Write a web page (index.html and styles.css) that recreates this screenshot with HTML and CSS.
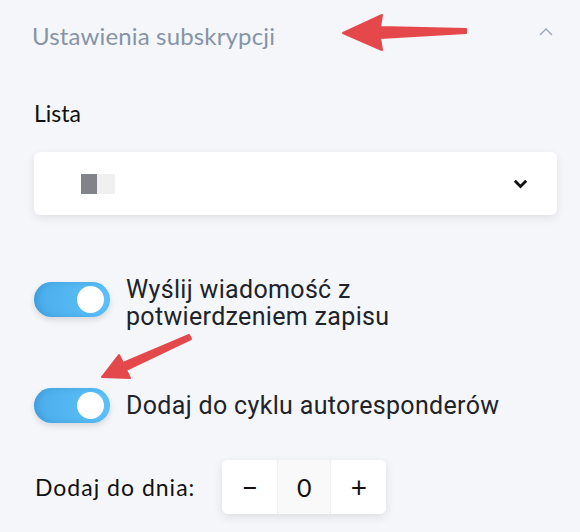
FILE: index.html
```html
<!DOCTYPE html>
<html lang="pl">
<head>
    <meta charset="UTF-8">
    <meta name="viewport" content="width=device-width, initial-scale=1.0">
    <title>Ustawienia subskrypcji</title>
    <link rel="stylesheet" href="styles.css">
</head>
<body>
    <main class="panel">
        <div class="panel-header">
            <h2>Ustawienia subskrypcji</h2>
            <svg class="collapse-icon" width="14" height="8" viewBox="0 0 14 8">
                <path d="M1 7 L7 1 L13 7" fill="none" stroke="#9aa6b4" stroke-width="1.4"/>
            </svg>
        </div>

        <div class="form-group">
            <label class="field-label">Lista</label>
            <div class="select-box">
                <span class="list-swatch">
                    <span class="swatch dark"></span>
                    <span class="swatch light"></span>
                </span>
                <svg class="select-arrow" width="15" height="10" viewBox="0 0 15 10">
                    <path d="M1.8 1.8 L7.5 7.5 L13.2 1.8" fill="none" stroke="#111" stroke-width="2.8"/>
                </svg>
            </div>
        </div>

        <div class="toggle-row first">
            <span class="toggle on"><span class="knob"></span></span>
            <span class="toggle-label">Wyślij wiadomość z<br>potwierdzeniem zapisu</span>
        </div>

        <div class="toggle-row second">
            <span class="toggle on"><span class="knob"></span></span>
            <span class="toggle-label">Dodaj do cyklu autoresponderów</span>
        </div>

        <div class="day-row">
            <span class="field-label day-label">Dodaj do dnia:</span>
            <div class="stepper">
                <button class="step-btn">&minus;</button>
                <span class="step-value">0</span>
                <button class="step-btn">+</button>
            </div>
        </div>
    </main>

    <!-- annotation arrows drawn over the screenshot -->
    <svg class="annotations" width="580" height="532" viewBox="0 0 580 532">
        <polygon points="343,33 382,15 380,27 466,29 466,33 380,38 382,50"
                 fill="#e5484b" stroke="#e5484b" stroke-width="2" stroke-linejoin="round"/>
        <polygon points="102,377 119,355 123,363 189,335 191,339 126,370 130,378"
                 fill="#e5484b" stroke="#e5484b" stroke-width="2" stroke-linejoin="round"/>
    </svg>
</body>
</html>
```

FILE: styles.css
```css
body {
    margin: 0;
    padding: 0;
    background-color: #f5f6fa;
    font-family: Lato, "Noto Sans", Arial, sans-serif;
    color: #111;
}

.panel {
    width: 580px;
    height: 532px;
    box-sizing: border-box;
    padding: 0 23px 0 34px;
    overflow: hidden;
}

.panel-header {
    display: flex;
    align-items: center;
    justify-content: space-between;
    height: 70px;
    padding-right: 4px;
}

.panel-header h2 {
    margin: 0;
    margin-left: -2px;
    font-size: 24px;
    font-weight: 400;
    color: #8594a6;
    letter-spacing: 0.15px;
}

.collapse-icon {
    margin-bottom: 6px;
}

.form-group {
    margin-top: 28px;
}

.field-label {
    display: block;
    font-size: 23px;
    line-height: 30px;
    color: #111;
}

.select-box {
    margin-top: 24px;
    height: 63px;
    background-color: #fff;
    border-radius: 6px;
    box-shadow: 0 3px 10px rgba(0, 0, 0, 0.09);
    display: flex;
    align-items: center;
    justify-content: space-between;
    padding: 0 29px 0 47px;
}

.list-swatch {
    display: flex;
}

.swatch {
    height: 20px;
}

.swatch.dark {
    background-color: #808388;
    width: 16px;
}

.swatch.light {
    background-color: #f0f0f0;
    width: 18px;
}

.toggle-row {
    display: flex;
    align-items: flex-start;
    gap: 16px;
    font-family: Roboto, Arial, sans-serif;
}

.toggle-row.first {
    margin-top: 67px;
}

.toggle-row.second {
    margin-top: 58px;
    align-items: center;
}

.toggle {
    position: relative;
    flex: none;
    width: 76px;
    height: 35px;
    border-radius: 18px;
    background: linear-gradient(90deg, #4badea, #5dc2fb);
    box-shadow: inset 3px 0 6px rgba(20, 90, 160, 0.22), 0 3px 6px rgba(0, 0, 0, 0.12);
}

.toggle.on .knob {
    position: absolute;
    top: 4px;
    right: 6px;
    width: 27px;
    height: 27px;
    border-radius: 50%;
    background-color: #fff;
}

.toggle-label {
    font-size: 25px;
    line-height: 27px;
    color: #20232a;
    letter-spacing: 0.33px;
}

.toggle-row.first .toggle-label {
    margin-top: -6px;
}

.day-row {
    display: flex;
    align-items: center;
    gap: 27px;
    margin-top: 37px;
}

.day-row .day-label {
    margin-left: 1px;
    letter-spacing: 1px;
}

.stepper {
    display: flex;
    height: 54px;
    background-color: #fff;
    border-radius: 6px;
    box-shadow: 0 3px 10px rgba(0, 0, 0, 0.1);
    overflow: hidden;
}

.step-btn,
.step-value {
    width: 55px;
    height: 54px;
    display: flex;
    align-items: center;
    justify-content: center;
    border: none;
    padding: 0;
    background: #fff;
    font-family: Lato, "Noto Sans", Arial, sans-serif;
    font-size: 28px;
    color: #111;
}

.step-value {
    width: 54px;
    background-color: #f9f9f9;
    box-shadow: inset 1px 0 0 #efefef, inset -1px 0 0 #efefef;
    font-size: 25px;
}

.annotations {
    position: absolute;
    top: 0;
    left: 0;
    pointer-events: none;
}
```
